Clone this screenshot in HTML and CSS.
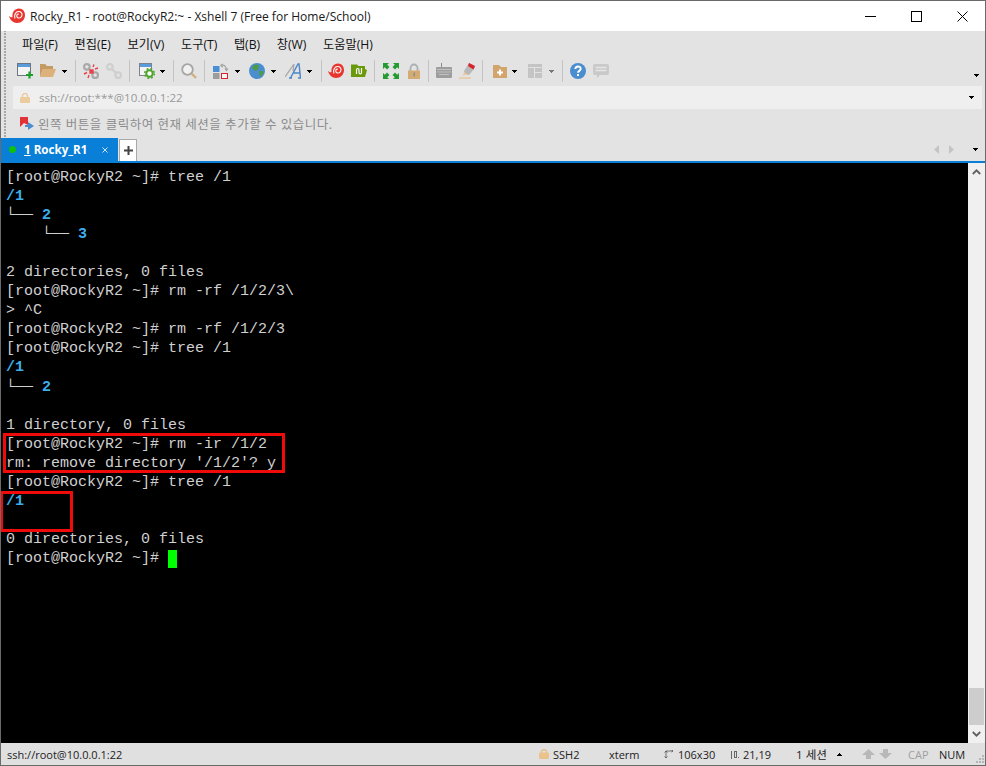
FILE: index.html
```html
<!DOCTYPE html>
<html lang="ko">
<head>
<meta charset="utf-8">
<title>Rocky_R1 - root@RockyR2:~ - Xshell 7</title>
<link rel="stylesheet" href="styles.css">
</head>
<body>
<svg class="defs" width="0" height="0">
  <defs>
    <symbol id="shell" viewBox="0 0 16 16">
      <path d="M0 8C1.500 9.500 3 9.500 3.500 9 3 4.500 5.500 .5 10 .5c3.500 0 6 2.800 6 6.500 0 4.800-3.500 8-8 8-4 0-6.800-3-8-7z" fill="#e8352e"/>
      <path d="M6 10.500C4.800 7 6.500 3.500 9.800 3.500c2.200 0 3.400 1.700 3.200 3.500-.2 2-1.800 3.200-3.300 3-1.400-.2-2.200-1.400-1.900-2.600.2-1 1.200-1.500 2-1.200" fill="none" stroke="#fff" stroke-width="1.100"/>
    </symbol>
    <symbol id="caret" viewBox="0 0 5 3">
      <path d="M0 0h5v1H4v1H3v1H2V2H1V1H0z"/>
    </symbol>
    <symbol id="caret-up" viewBox="0 0 5 3">
      <path d="M2 0h1v1h1v1h1v1H0V2h1V1h1z"/>
    </symbol>
  </defs>
</svg>
<div class="window">
  <header class="titlebar">
    <svg class="logo"><use href="#shell"/></svg>
    <span class="title-text">Rocky_R1 - root@RockyR2:~ - Xshell 7 (Free for Home/School)</span>
    <div class="win-btns">
      <svg class="win-btn" viewBox="0 0 11 11"><path d="M0 5.500h11" stroke="#000" fill="none"/></svg>
      <svg class="win-btn" viewBox="0 0 11 11"><rect x=".5" y=".5" width="10" height="10" stroke="#000" fill="none"/></svg>
      <svg class="win-btn" viewBox="0 0 11 11"><path d="M.5.500l10 10M10.500.500l-10 10" stroke="#000" fill="none" stroke-width="1"/></svg>
    </div>
  </header>

  <div class="bars">
    <nav class="menubar">
      <span>파일(F)</span><span>편집(E)</span><span>보기(V)</span><span>도구(T)</span><span>탭(B)</span><span>창(W)</span><span>도움말(H)</span>
    </nav>

    <div class="toolbar">
      <!-- new session -->
      <svg class="ic" viewBox="0 0 16 16"><rect x=".5" y=".5" width="13" height="12" fill="#f4f4f4" stroke="#6d7680"/><rect x="1" y="1" width="12" height="3" fill="#5a9bdc"/><path d="M9 12h7M12.500 8.500v7" stroke="#1fa02c" stroke-width="2.200"/></svg>
      <!-- open folder -->
      <svg class="ic" viewBox="0 0 16 16"><path d="M0 1h5l2 2h6v3H3L0 14z" fill="#c49a63"/><path d="M0 14l3-8h13l-3 8z" fill="#dcb17c"/></svg>
      <svg class="car"><use href="#caret"/></svg>
      <i class="sep s8"></i>
      <!-- disconnect -->
      <svg class="ic" viewBox="0 0 16 16"><g fill="none" stroke="#a9a9a9" stroke-width="2.200"><rect x="1.100" y="1.100" width="5.500" height="5.500" rx="2.500"/><rect x="9.400" y="9.400" width="5.500" height="5.500" rx="2.500"/></g><path d="M7 7h3v3H7zM11 1.500l-1 2.500M15 5l-3 1M1 11l3-1.500M5 15l1-3" stroke="#e8434b" stroke-width="1.400" fill="#e8434b"/></svg>
      <!-- connect -->
      <svg class="ic" viewBox="0 0 16 16"><g fill="none" stroke="#cfcfcf" stroke-width="2.200"><rect x="1.100" y="1.100" width="5.500" height="5.500" rx="2.500"/><rect x="9.400" y="9.400" width="5.500" height="5.500" rx="2.500"/><path d="M5 5l6 6"/></g></svg>
      <i class="sep s7 a9"></i>
      <!-- properties -->
      <svg class="ic" viewBox="0 0 16 16"><rect x=".5" y=".5" width="12" height="12" fill="#f4f4f4" stroke="#7b848d"/><rect x="1" y="1" width="11" height="3" fill="#5a9bdc"/><circle cx="10.500" cy="10.500" r="3.200" fill="#fff" stroke="#4da32c" stroke-width="2"/><circle cx="10.500" cy="10.500" r="4.800" fill="none" stroke="#4da32c" stroke-width="1.500" stroke-dasharray="2 1.800"/></svg>
      <svg class="car c5"><use href="#caret"/></svg>
      <i class="sep s8"></i>
      <!-- search -->
      <svg class="ic" viewBox="0 0 16 16"><circle cx="6.500" cy="6.500" r="5.300" fill="#f1f1f1" stroke="#a6a6a6" stroke-width="1.800"/><path d="M10.500 10.500l4.500 4.500" stroke="#d2ae82" stroke-width="2.400"/></svg>
      <i class="sep s7 a8"></i>
      <!-- transfer -->
      <svg class="ic" viewBox="0 0 16 16"><rect x="0" y="3" width="6.500" height="6" fill="#4a8fd6"/><rect x="0" y="10" width="6.500" height="6" fill="#9c9c9c"/><rect x="8.500" y="10.500" width="6" height="5" fill="#f4f4f4" stroke="#d8232c"/><path d="M7.500 2.500c3-1.500 6 .5 6 4.500M12 5.500L13.500 7.500 15 5.500M7.500 2.500L10 1M7.500 2.500L10 4" fill="none" stroke="#a0a0a0" stroke-width="1.100"/></svg>
      <svg class="car"><use href="#caret"/></svg>
      <!-- globe -->
      <svg class="ic g9" viewBox="0 0 16 16"><circle cx="8" cy="8" r="8" fill="#4a8ed0"/><path d="M3 4l3-2.500 4 .5-.5 3L7.500 8 6 7.500 4 6zM10 8h4l.5 2-3 4-1-1.500z" fill="#4e9a45"/></svg>
      <svg class="car"><use href="#caret"/></svg>
      <!-- font -->
      <svg class="ic g9" viewBox="0 0 16 16"><path d="M0 14L9 1M9 1l-1 7" fill="none" stroke="#a8a8a8" stroke-width="1.300"/><path d="M4 15h3M5.500 15L13 1h1l1.500 14M13 15h3M8 10h7" fill="none" stroke="#4a86c8" stroke-width="1.400"/></svg>
      <svg class="car"><use href="#caret"/></svg>
      <i class="sep s9 a6"></i>
      <!-- shell -->
      <svg class="ic"><use href="#shell"/></svg>
      <!-- xftp folder -->
      <svg class="ic" viewBox="0 0 16 16"><path d="M0 1.500h6l1.500 1.500H14v3l2 1-2 7H0z" fill="#6a9a0b"/><path d="M5.500 11V7c0-2 2.500-2 2.500 0v2.500c0 2 2.500 2 2.500 0V5" fill="none" stroke="#fff" stroke-width="1.200"/></svg>
      <i class="sep"></i>
      <!-- fullscreen -->
      <svg class="ic g8" viewBox="0 0 16 16"><g fill="#249b2e"><path d="M0 0h6L4.200 1.800 6.500 4 4 6.500 1.800 4.200 0 6z"/><path d="M16 0v6l-1.800-1.800L12 6.500 9.500 4l2.300-2.200L10 0z"/><path d="M0 16v-6l1.800 1.800L4 9.500 6.500 12l-2.300 2.200L6 16z"/><path d="M16 16h-6l1.800-1.800L9.500 12 12 9.500l2.200 2.300L16 10z"/></g></svg>
      <!-- lock -->
      <svg class="ic" viewBox="0 0 16 16"><path d="M4.500 8V5a3.500 3.500 0 017 0v3" fill="none" stroke="#adb0b3" stroke-width="1.800"/><rect x="2" y="7.500" width="12" height="8.500" fill="#d5ab74"/><rect x="7.500" y="9.500" width="1.500" height="4" fill="#8f8f8f"/></svg>
      <i class="sep s6"></i>
      <!-- keyboard -->
      <svg class="ic" viewBox="0 0 16 16"><path d="M5.500 0v4" stroke="#8a8a8a"/><rect x="0" y="4" width="16" height="11" rx="1" fill="#9d9d9d"/><path d="M1.500 6.500h13M1.500 9h13M3.500 11.500h9" stroke="#e6e6e6" stroke-dasharray="1 1"/></svg>
      <!-- highlighter -->
      <svg class="ic" viewBox="0 0 16 16"><path d="M10 0l6 3-1 3-5 6-4-1-1-3z" fill="#b8b8b8"/><path d="M10 0l6 3-1.500 3.500L9 3z" fill="#d8232c"/><path d="M5 9l3 2-4 2z" fill="#eec694"/><path d="M0 15h12" stroke="#eeb97a"/></svg>
      <i class="sep a9"></i>
      <!-- folder plus -->
      <svg class="ic" viewBox="0 0 16 16"><path d="M1 2h6l2 2h6v11H1z" fill="#d2a56c"/><path d="M8 6.500v6M5 9.500h6" stroke="#fff" stroke-width="2"/></svg>
      <svg class="car c4"><use href="#caret"/></svg>
      <!-- layout -->
      <svg class="ic g9" viewBox="0 0 16 16"><path d="M2 1h14v14H2z" fill="#c4c4c4"/><path d="M2.500 4.500h13M8.500 4.500V15M8.500 9.500h7" stroke="#e3e3e3"/></svg>
      <svg class="car off"><use href="#caret"/></svg>
      <i class="sep s8"></i>
      <!-- help -->
      <svg class="ic" viewBox="0 0 16 16"><circle cx="8" cy="8" r="8" fill="#4a8ed0"/><path d="M5.300 6c.2-3.300 5.400-3.300 5.400-.2 0 2.100-2.700 2-2.700 4" fill="none" stroke="#fff" stroke-width="1.900"/><rect x="7" y="11" width="2" height="2" fill="#fff"/></svg>
      <!-- chat -->
      <svg class="ic" viewBox="0 0 16 16"><path d="M2 1h12a2 2 0 012 2v7a2 2 0 01-2 2H7l-3 3v-3H2a2 2 0 01-2-2V3a2 2 0 012-2z" fill="#c9c9c9"/><path d="M2.500 4.500h11M2.500 7.500h11" stroke="#e6e6e6" stroke-width="1.300"/></svg>
      <svg class="car end"><use href="#caret"/></svg>
    </div>

    <div class="addressbar">
      <svg class="addr-lock" viewBox="0 0 10 10"><path d="M2.500 4.500V3a2.500 2.500 0 015 0v1.500" fill="none" stroke="#e7c596" stroke-width="1.200"/><rect y="4" width="10" height="6" rx="1" fill="#eccb9d"/></svg>
      <span class="addr-text">ssh://root:***@10.0.0.1:22</span>
      <svg class="car end"><use href="#caret"/></svg>
    </div>

    <div class="linkbar">
      <svg class="link-ic" viewBox="0 0 14 14"><path d="M0 0h8v8L4 6 0 10z" fill="#e23237"/><path d="M0 0h8v6H0z" fill="#e23237"/><path d="M5 8h3V5l6 4-6 4v-3H5z" fill="#4a8ed0"/></svg>
      <span>왼쪽 버튼을 클릭하여 현재 세션을 추가할 수 있습니다.</span>
    </div>

    <div class="tabbar">
      <div class="tab">
        <i class="dot"></i>
        <span class="tab-name"><u>1</u> Rocky_R1</span>
        <svg class="tab-x" viewBox="0 0 6 6"><path d="M.5.500l5 5M5.500.500l-5 5" stroke="#cfe4f7" fill="none"/></svg>
      </div>
      <div class="tab-add"><svg viewBox="0 0 9 9"><path d="M4.500 0v9M0 4.500h9" stroke="#444" stroke-width="2"/></svg></div>
      <svg class="tab-arrow prev" viewBox="0 0 5 9"><path d="M5 0v9L0 4.500z" fill="#c4c4c4"/></svg>
      <svg class="tab-arrow next" viewBox="0 0 5 9"><path d="M0 0v9l5-4.500z" fill="#c4c4c4"/></svg>
      <svg class="car tab-menu"><use href="#caret"/></svg>
    </div>
  </div>

  <main class="main">
    <div class="terminal">
      <div class="row">[root@RockyR2 ~]# tree /1</div>
      <div class="row"><b>/1</b></div>
      <div class="row">└── <b>2</b></div>
      <div class="row">    └── <b>3</b></div>
      <div class="row"></div>
      <div class="row">2 directories, 0 files</div>
      <div class="row">[root@RockyR2 ~]# rm -rf /1/2/3\</div>
      <div class="row">&gt; ^C</div>
      <div class="row">[root@RockyR2 ~]# rm -rf /1/2/3</div>
      <div class="row">[root@RockyR2 ~]# tree /1</div>
      <div class="row"><b>/1</b></div>
      <div class="row">└── <b>2</b></div>
      <div class="row"></div>
      <div class="row">1 directory, 0 files</div>
      <div class="row">[root@RockyR2 ~]# rm -ir /1/2</div>
      <div class="row">rm: remove directory '/1/2'? y</div>
      <div class="row">[root@RockyR2 ~]# tree /1</div>
      <div class="row"><b>/1</b></div>
      <div class="row"></div>
      <div class="row">0 directories, 0 files</div>
      <div class="row">[root@RockyR2 ~]# <i class="cursor"></i></div>
      <div class="mark mark-a"></div>
      <div class="mark mark-b"></div>
    </div>
    <div class="scrollbar">
      <svg class="sb-arrow" viewBox="0 0 9 6"><path d="M.8 5L4.500 1.300 8.200 5" fill="none" stroke="#606060" stroke-width="1.800"/></svg>
      <div class="sb-track"><div class="sb-thumb"></div></div>
      <svg class="sb-arrow" viewBox="0 0 9 6"><path d="M.8 1L4.500 4.700 8.200 1" fill="none" stroke="#606060" stroke-width="1.800"/></svg>
    </div>
  </main>

  <footer class="statusbar">
    <span class="st-left">ssh://root@10.0.0.1:22</span>
    <svg class="st-lock" viewBox="0 0 10 10"><path d="M2.500 4.500V3a2.500 2.500 0 015 0v1.500" fill="none" stroke="#e6bd85" stroke-width="1.300"/><rect y="3.500" width="10" height="6.500" rx="1" fill="#e9c28c"/></svg>
    <span class="st-ssh">SSH2</span>
    <span class="st-term">xterm</span>
    <svg class="st-size" viewBox="0 0 9 9"><path d="M2 1v7M0.500 2.500L2 1l1.500 1.500M0.500 6.500L2 8l1.500-1.500M2 1h7M7.500 0L9 1 7.500 2" fill="none" stroke="#555" stroke-width=".8"/></svg>
    <span class="st-dim">106x30</span>
    <svg class="st-pos" viewBox="0 0 9 9"><path d="M0 1h1v7H0zM3 1h3v1H3zM3 2h1v5H3zM5 2h1v5H5zM3 7h3v1H3zM7 7h1v1H7zM0 8h1v1H0z" fill="#666"/></svg>
    <span class="st-rc">21,19</span>
    <span class="st-sess">1 세션</span>
    <svg class="car st-up"><use href="#caret-up"/></svg>
    <svg class="st-arrow first" viewBox="0 0 13 10"><path d="M6.500 0L13 6H9v4H4V6H0z" fill="#b8b8b8"/></svg>
    <svg class="st-arrow" viewBox="0 0 13 10"><path d="M6.500 10L13 4H9V0H4v4H0z" fill="#b8b8b8"/></svg>
    <span class="st-cap">CAP</span>
    <span class="st-num">NUM</span>
    <svg class="st-grip" viewBox="0 0 10 10"><path d="M7 1h2v2H7zM4 4h2v2H4zM7 4h2v2H7zM1 7h2v2H1zM4 7h2v2H4zM7 7h2v2H7z" fill="#b5b5b5"/></svg>
  </footer>
</div>
</body>
</html>
```
FILE: styles.css
```css
* { box-sizing: border-box; }
html, body { margin: 0; padding: 0; }
body {
  width: 986px;
  height: 766px;
  overflow: hidden;
  background: #fff;
  font-family: "Open Sans", "Noto Sans CJK KR", sans-serif;
  font-size: 12px;
  color: #111;
}
.defs { position: absolute; }
.window {
  width: 986px;
  height: 766px;
  display: flex;
  flex-direction: column;
  border: 1px solid #6a6a6a;
  background: #e3e3e3;
}

/* Title bar */
.titlebar {
  height: 30px;
  flex: none;
  background: #fff;
  display: flex;
  align-items: center;
  padding-left: 8px;
}
.logo { width: 16px; height: 16px; flex: none; }
.title-text { margin-left: 5px; font-size: 12.05px; color: #1a1a1a; white-space: nowrap; }
.win-btns { margin-left: auto; display: flex; gap: 35px; padding-right: 17px; }
.win-btn { width: 11px; height: 11px; display: block; }

/* Bars */
.bars {
  flex: none;
  background:
    radial-gradient(circle at 1px 1px, #a8a8a8 1px, transparent 1.2px) 3px 2px / 3px 3px repeat-y,
    #e3e3e3;
  background-size: 3px 3px, auto;
  background-position: 3px 2px, 0 0;
  background-repeat: repeat-y, no-repeat;
}
.menubar {
  height: 26px;
  display: flex;
  align-items: center;
  gap: 16.6px;
  padding-left: 21px;
  font-size: 12.2px;
  color: #111;
}
.toolbar {
  height: 29px;
  display: flex;
  align-items: center;
  padding-left: 16px;
  padding-bottom: 1px;
  padding-right: 6px;
}
.ic { width: 16px; height: 16px; flex: none; margin-left: 7px; display: block; }
.ic:first-child { margin-left: 0; }
.ic.g8 { margin-left: 0; }
.ic.g9 { margin-left: 9px; }
.car { width: 5px; height: 3px; flex: none; margin-left: 6px; display: block; fill: #000; }
.car.c5 { margin-left: 5px; }
.car.c4 { margin-left: 4px; }
.car.off { margin-left: 7px; fill: #777; }
.car.end { margin-left: auto; }
.toolbar .end { align-self: flex-end; margin-bottom: 8px; }
.sep { width: 1px; height: 22px; flex: none; background: #c3c3c3; margin: 0 0 0 7px; }
.sep.s6 { margin-left: 6px; }
.sep.s8 { margin-left: 8px; }
.sep.s9 { margin-left: 9px; }
.sep + .ic { margin-left: 7px; }
.sep.a6 + .ic { margin-left: 6px; }
.sep.a8 + .ic { margin-left: 8px; }
.sep.a9 + .ic { margin-left: 9px; }
.sep + .ic.g8 { margin-left: 8px; }

.addressbar {
  height: 23px;
  margin: 0 3px 0 12px;
  background: #efefef;
  display: flex;
  align-items: center;
  padding: 0 8px 0 7px;
  color: #999;
  font-size: 11.6px;
}
.addr-lock { width: 10px; height: 10px; flex: none; }
.addr-text { margin-left: 9px; }

.linkbar {
  height: 29px;
  display: flex;
  align-items: center;
  padding-left: 19px;
  color: #8c8c8c;
  font-size: 12.5px;
  letter-spacing: .52px;
}
.link-ic { width: 14px; height: 14px; flex: none; margin-right: 4px; }

.tabbar { height: 23px; display: flex; align-items: stretch; }
.tab {
  width: 117px;
  background: #0a7fd8;
  color: #fff;
  display: flex;
  align-items: center;
  padding-left: 8px;
}
.dot { width: 7px; height: 7px; border-radius: 50%; background: #0fc00f; flex: none; }
.tab-name { margin-left: 8px; font-weight: 700; font-size: 11.6px; white-space: nowrap; }
.tab-x { width: 6px; height: 6px; margin-left: 15px; flex: none; }
.tab-add {
  width: 18px;
  margin: 1px 0 0 1px;
  background: #fff;
  border: 1px solid #a9a9a9;
  border-bottom: 0;
  display: flex;
  align-items: center;
  justify-content: center;
}
.tab-add svg { width: 9px; height: 9px; }
.tab-arrow { width: 5px; height: 9px; align-self: center; flex: none; }
.tab-arrow.prev { margin-left: auto; }
.tab-arrow.next { margin-left: 10px; }
.car.tab-menu { align-self: center; margin-left: 19px; margin-right: 7px; }

/* Terminal */
.main {
  flex: 1;
  min-height: 0;
  display: flex;
  border-top: 2px solid #0a7fd8;
}
.terminal {
  flex: 1;
  position: relative;
  background: #000;
  padding: 5px 0 0 5px;
  color: #d0d0d0;
  font-family: "Liberation Mono", monospace;
  font-size: 15px;
  overflow: hidden;
}
.row { height: 19.05px; line-height: 19px; white-space: pre; }
.row b { color: #3daee9; font-weight: 700; }
.cursor {
  display: inline-block;
  width: 9px;
  height: 18px;
  background: #00ff00;
  vertical-align: top;
  margin-top: 1px;
}
.mark { position: absolute; border: 3px solid #f00a0a; }
.mark-a { left: 2px; top: 270px; width: 282px; height: 40px; }
.mark-b { left: -1px; top: 328px; width: 73px; height: 41px; }

.scrollbar {
  width: 17px;
  flex: none;
  background: #f0f0f0;
  display: flex;
  flex-direction: column;
}
.sb-arrow { width: 9px; height: 6px; flex: none; margin: 6px auto; }
.sb-track { flex: 1; padding: 0 1px; display: flex; flex-direction: column; justify-content: flex-end; }
.sb-thumb { height: 37px; background: #cdcdcd; }

/* Status bar */
.statusbar {
  height: 22px;
  flex: none;
  background: #e0e0e0;
  display: flex;
  align-items: center;
  padding-left: 6px;
  font-size: 11px;
  color: #222;
  white-space: nowrap;
}
.st-left { width: 532px; }
.st-lock { width: 10px; height: 10px; flex: none; }
.st-ssh { margin-left: 4px; width: 56px; }
.st-term { width: 55px; }
.st-size { width: 9px; height: 9px; flex: none; }
.st-dim { margin-left: 5px; width: 53px; }
.st-pos { width: 9px; height: 9px; flex: none; }
.st-rc { margin-left: 3px; width: 53px; }
.st-sess { width: 41px; font-size: 11.6px; }
.car.st-up { margin-left: 0; }
.st-arrow { width: 13px; height: 10px; flex: none; margin-left: 4px; }
.st-arrow.first { margin-left: 20px; }
.st-cap { margin-left: 16px; color: #a0a0a0; width: 31px; }
.st-num { width: 36px; }
.st-grip { width: 10px; height: 10px; flex: none; align-self: flex-end; margin-bottom: 1px; }
```
